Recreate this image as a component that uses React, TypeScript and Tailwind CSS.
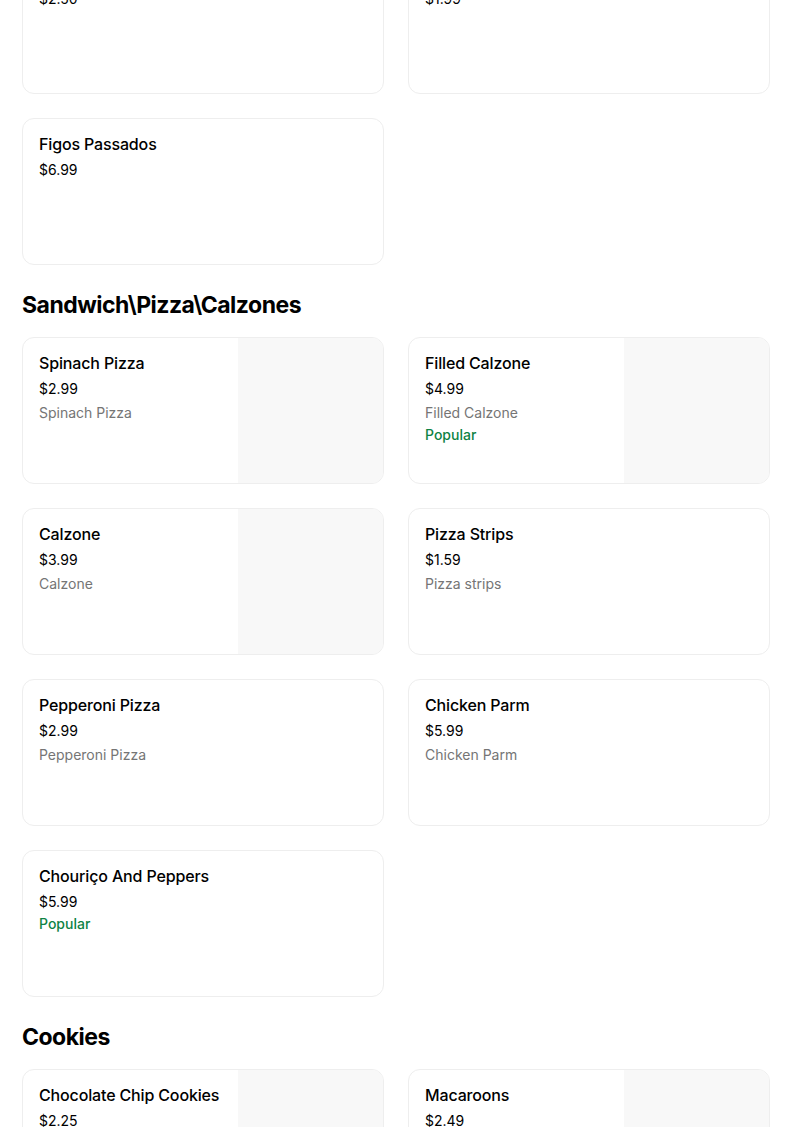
import React from "react";

type Item = { name: string; price: string; desc?: string; popular?: boolean; img?: boolean };

const Card = ({ item }: { item: Item }) => (
  <div className="flex h-[147px] overflow-hidden rounded-xl border border-[#eeeeee] bg-white">
    <div className="flex-1 min-w-0 px-4 pt-[15px]">
      <div className="text-[16px] leading-5 font-medium text-[#000000] whitespace-nowrap tracking-[-0.15px]">{item.name}</div>
      <div className="mt-[6px] text-[14px] leading-5 text-[#000000]">{item.price}</div>
      {item.desc && <div className="mt-1 text-[14px] leading-5 text-[#757575]">{item.desc}</div>}
      {item.popular && (
        <div className="mt-[2px] text-[14px] leading-5 font-medium text-[#0e8345]">Popular</div>
      )}
    </div>
    {item.img && <div className="w-[145px] h-full bg-[#f8f8f8] shrink-0" />}
  </div>
);

const Grid = ({ items }: { items: Item[] }) => (
  <div className="grid grid-cols-2 gap-6">
    {items.map((it, i) => (
      <Card key={i} item={it} />
    ))}
  </div>
);

const Heading = ({ children }: { children: React.ReactNode }) => (
  <h2 className="mt-6 mb-4 text-[23px] leading-8 font-bold text-black tracking-[-0.5px]">{children}</h2>
);

export default function App() {
  return (
    <div className="min-h-[1127px] bg-white overflow-hidden" style={{ fontFamily: "Inter, 'Liberation Sans', sans-serif" }}>
      <div className="ml-[22px] w-[748px] mt-[-53px]">
        <Grid
          items={[
            { name: "Pastel De Nata", price: "$2.50" },
            { name: "Bolo", price: "$1.99" },
            { name: "Figos Passados", price: "$6.99" },
          ]}
        />
        <Heading>Sandwich\Pizza\Calzones</Heading>
        <Grid
          items={[
            { name: "Spinach Pizza", price: "$2.99", desc: "Spinach Pizza", img: true },
            { name: "Filled Calzone", price: "$4.99", desc: "Filled Calzone", popular: true, img: true },
            { name: "Calzone", price: "$3.99", desc: "Calzone", img: true },
            { name: "Pizza Strips", price: "$1.59", desc: "Pizza strips" },
            { name: "Pepperoni Pizza", price: "$2.99", desc: "Pepperoni Pizza" },
            { name: "Chicken Parm", price: "$5.99", desc: "Chicken Parm" },
            { name: "Chouriço And Peppers", price: "$5.99", popular: true },
          ]}
        />
        <Heading>Cookies</Heading>
        <Grid
          items={[
            { name: "Chocolate Chip Cookies", price: "$2.25", img: true },
            { name: "Macaroons", price: "$2.49", img: true },
          ]}
        />
      </div>
    </div>
  );
}
